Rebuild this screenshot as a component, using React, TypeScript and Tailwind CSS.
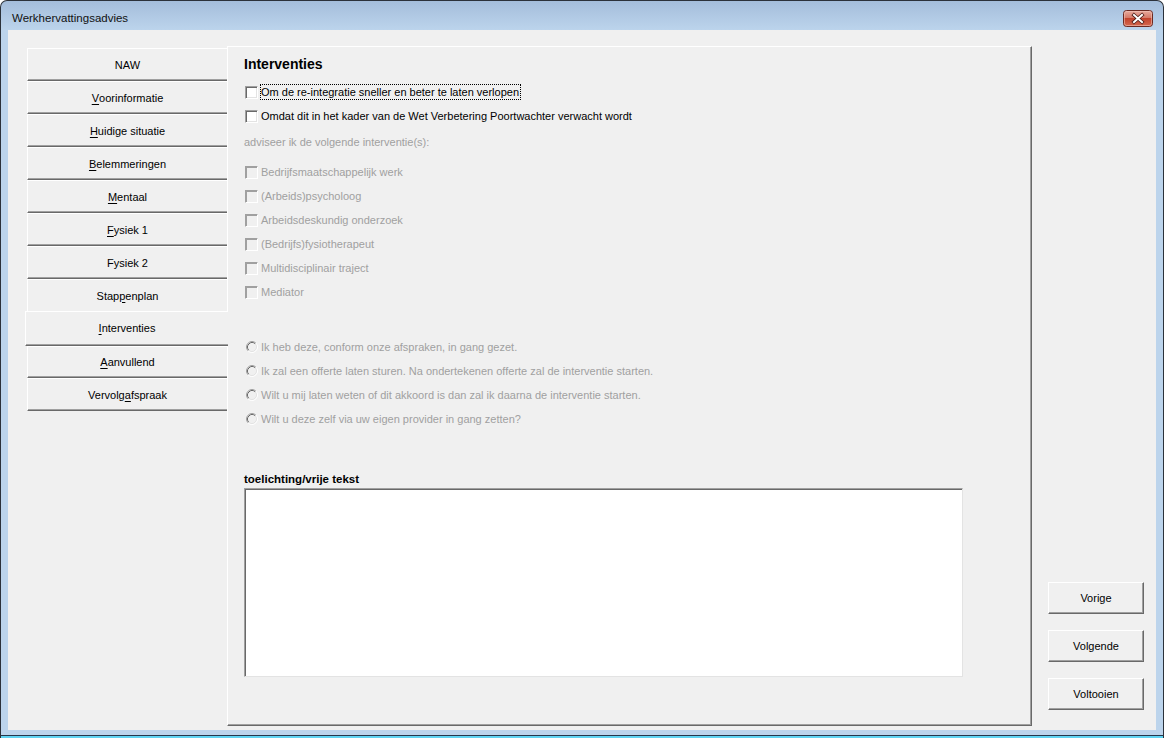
import React from 'react';

type TabDef = { label: string; u: number; cls: string; bottom?: boolean; active?: boolean };

const tabs: TabDef[] = [
  { label: 'NAW', u: -1, cls: 'h-[33px]' },
  { label: 'Voorinformatie', u: 0, cls: 'h-[33px]' },
  { label: 'Huidige situatie', u: 0, cls: 'h-[33px]' },
  { label: 'Belemmeringen', u: 0, cls: 'h-[33px]' },
  { label: 'Mentaal', u: 0, cls: 'h-[33px]' },
  { label: 'Fysiek 1', u: 0, cls: 'h-[33px]' },
  { label: 'Fysiek 2', u: -1, cls: 'h-[33px]' },
  { label: 'Stappenplan', u: 4, cls: 'h-[32px]', bottom: false },
  { label: 'Interventies', u: 0, cls: 'h-[35px]', active: true },
  { label: 'Aanvullend', u: 0, cls: 'h-[32px]' },
  { label: 'Vervolgafspraak', u: 7, cls: 'h-[33px]' },
];

const interventies = [
  'Bedrijfsmaatschappelijk werk',
  '(Arbeids)psycholoog',
  'Arbeidsdeskundig onderzoek',
  '(Bedrijfs)fysiotherapeut',
  'Multidisciplinair traject',
  'Mediator',
];

const opties = [
  'Ik heb deze, conform onze afspraken, in gang gezet.',
  'Ik zal een offerte laten sturen. Na ondertekenen offerte zal de interventie starten.',
  'Wilt u mij laten weten of dit akkoord is dan zal ik daarna de interventie starten.',
  'Wilt u deze zelf via uw eigen provider in gang zetten?',
];

// label with the mnemonic letter underlined
function Mnemonic({ text, u }: { text: string; u: number }) {
  if (u < 0) return <>{text}</>;
  return (
    <>
      {text.slice(0, u)}
      <span className="underline underline-offset-[2px]">{text[u]}</span>
      {text.slice(u + 1)}
    </>
  );
}

function Tab({ tab }: { tab: TabDef }) {
  const withBottom = tab.bottom !== false;
  if (tab.active) {
    return (
      <div
        className={`relative z-10 -ml-[2px] flex w-[203px] shrink-0 items-center justify-center border-t border-l border-t-white border-l-white border-b border-b-[#696969] bg-[#f0f0f0] shadow-[inset_0_-1px_0_#a0a0a0] ${tab.cls}`}
      >
        <Mnemonic text={tab.label} u={tab.u} />
      </div>
    );
  }
  return (
    <div
      className={`flex w-[200px] shrink-0 items-center justify-center border-t border-l border-t-white border-l-white bg-[#f0f0f0] pt-px ${
        withBottom ? 'border-b border-b-[#696969] shadow-[inset_0_-1px_0_#a0a0a0]' : ''
      } ${tab.cls}`}
    >
      <Mnemonic text={tab.label} u={tab.u} />
    </div>
  );
}

function CheckBox({ disabled }: { disabled?: boolean }) {
  return (
    <span
      className={`ml-px block h-[13px] w-[13px] shrink-0 border border-t-[#a0a0a0] border-l-[#a0a0a0] border-r-white border-b-white ${
        disabled
          ? 'bg-[#f0f0f0] shadow-[inset_1px_1px_0_#a0a0a0,inset_-1px_-1px_0_#f0f0f0]'
          : 'bg-white shadow-[inset_1px_1px_0_#696969,inset_-1px_-1px_0_#e3e3e3]'
      }`}
    />
  );
}

function Radio() {
  return (
    <svg width="12" height="12" viewBox="0 0 12 12" className="ml-[2px] shrink-0">
      <circle cx="6" cy="6" r="5" fill="#f0f0f0" />
      <path d="M2.11 9.89 A5.5 5.5 0 0 1 9.89 2.11" fill="none" stroke="#a0a0a0" />
      <path d="M9.89 2.11 A5.5 5.5 0 0 1 2.11 9.89" fill="none" stroke="#ffffff" />
      <path d="M2.82 9.18 A4.5 4.5 0 0 1 9.18 2.82" fill="none" stroke="#696969" />
      <path d="M9.18 2.82 A4.5 4.5 0 0 1 2.82 9.18" fill="none" stroke="#e3e3e3" />
    </svg>
  );
}

function CloseButton() {
  return (
    <svg width="30" height="17" viewBox="0 0 30 17">
      <defs>
        <linearGradient id="closeRed" x1="0" y1="0" x2="0" y2="1">
          <stop offset="0" stopColor="#e9ada1" />
          <stop offset="0.45" stopColor="#d57a68" />
          <stop offset="0.5" stopColor="#c2432d" />
          <stop offset="1" stopColor="#d66a50" />
        </linearGradient>
      </defs>
      <rect x="0.5" y="0.5" width="29" height="16" rx="3" fill="url(#closeRed)" stroke="#6b2a22" />
      <rect x="1.5" y="1.5" width="27" height="14" rx="2" fill="none" stroke="#f3c8bd" strokeOpacity="0.55" />
      <path d="M11 5 L19 12 M19 5 L11 12" stroke="#4b1b15" strokeWidth="3.6" strokeLinecap="square" />
      <path d="M11 5 L19 12 M19 5 L11 12" stroke="#ffffff" strokeWidth="2" strokeLinecap="square" />
    </svg>
  );
}

function NavButton({ label }: { label: string }) {
  return (
    <div className="flex h-[32px] w-[96px] items-center justify-center border border-t-white border-l-white border-r-[#696969] border-b-[#696969] bg-[#f0f0f0] shadow-[inset_-1px_-1px_0_#a0a0a0]">
      {label}
    </div>
  );
}

const App = () => {
  return (
    <div className="h-[738px] w-[1164px] overflow-hidden bg-white font-['Liberation_Sans',Arial,sans-serif] text-[11px] text-black">
      <div className="flex h-full flex-col rounded-t-[7px] border-x border-t border-[#2b313a] bg-[linear-gradient(to_bottom,#a4bddb,#bcd4ec_29px,#bcd4ec)]">
        {/* Title bar */}
        <div className="flex h-[29px] shrink-0 items-center justify-between pl-[11px] pr-[10px] pt-[6px]">
          <span className="text-[11.5px] text-[#111]">Werkhervattingsadvies</span>
          <CloseButton />
        </div>

        {/* Client area */}
        <div className="mx-[7px] flex h-[700px] shrink-0 bg-[#f0f0f0] pl-[19px] pt-[16px]">
          {/* Tabs */}
          <div className="mt-[2px] flex w-[200px] shrink-0 flex-col">
            {tabs.map((t) => (
              <Tab key={t.label} tab={t} />
            ))}
          </div>

          {/* Page */}
          <div className="flex h-[680px] w-[805px] shrink-0 flex-col border border-t-white border-l-white border-r-[#696969] border-b-[#696969] bg-[#f0f0f0] pl-[16px] pt-[9px] shadow-[inset_-1px_-1px_0_#a0a0a0]">
            <h1 className="h-[16px] text-[14px] font-bold leading-[16px]">Interventies</h1>

            <div className="mt-[8px] flex h-[24px] items-center">
              <CheckBox />
              <span className="ml-[2px] border border-dotted border-black pr-px leading-[14px]">
                Om de re-integratie sneller en beter te laten verlopen
              </span>
            </div>
            <div className="flex h-[24px] items-center">
              <CheckBox />
              <span className="ml-[3px]">Omdat dit in het kader van de Wet Verbetering Poortwachter verwacht wordt</span>
            </div>

            <div className="mt-[2px] flex h-[24px] items-center text-[#a0a0a0]">adviseer ik de volgende interventie(s):</div>

            <div className="mt-[6px] flex flex-col">
              {interventies.map((s) => (
                <div key={s} className="flex h-[24px] items-center text-[#a0a0a0]">
                  <CheckBox disabled />
                  <span className="ml-[3px]">{s}</span>
                </div>
              ))}
            </div>

            <div className="mt-[31px] flex flex-col">
              {opties.map((s) => (
                <div key={s} className="flex h-[24px] items-center text-[#a0a0a0]">
                  <Radio />
                  <span className="ml-[3px]">{s}</span>
                </div>
              ))}
            </div>

            <div className="mt-[40px] h-[16px] text-[11.5px] font-bold leading-[16px]">toelichting/vrije tekst</div>
            <div className="mt-px h-[189px] w-[719px] border border-t-[#a0a0a0] border-l-[#a0a0a0] border-r-[#e3e3e3] border-b-[#e3e3e3] bg-white shadow-[inset_1px_1px_0_#696969]" />
          </div>

          {/* Wizard buttons */}
          <div className="ml-[16px] flex h-[680px] w-[96px] shrink-0 flex-col justify-end gap-[16px] pb-[16px]">
            <NavButton label="Vorige" />
            <NavButton label="Volgende" />
            <NavButton label="Voltooien" />
          </div>
        </div>

        <div className="h-[5px] shrink-0" />
        <div className="h-px shrink-0 bg-[#26364a]" />
        <div className="h-[2px] shrink-0 bg-[#5fd3f2]" />
      </div>
    </div>
  );
};

export default App;
